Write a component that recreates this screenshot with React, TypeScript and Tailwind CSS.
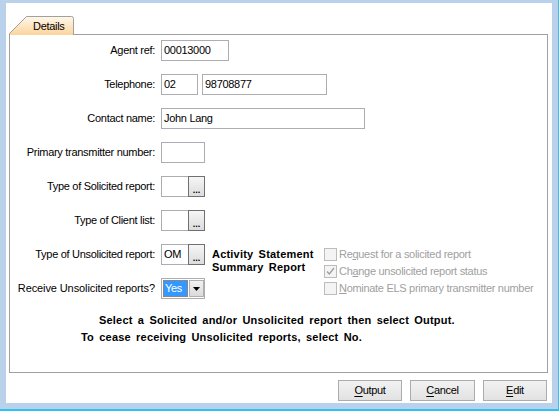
import React from 'react';

const font = { fontFamily: '"Liberation Sans", Arial, sans-serif' };

function Field({ w, value }: { w: string; value?: string }) {
  return (
    <div className={`${w} h-[21px] border border-[#abadb3] bg-white flex items-center pl-[2px] text-black`}>
      {value}
    </div>
  );
}

function PickBox({ value }: { value?: string }) {
  return (
    <div className="w-[44px] h-[21px] border border-[#abadb3] bg-white flex">
      <div className="flex-1 flex items-center pl-[2px]">{value}</div>
      <div className="w-[17px] -my-px -mr-px border border-[#707070] bg-gradient-to-b from-[#f6f6f6] to-[#dcdcdc] flex items-end justify-center pb-[3px]">
        <span className="text-[9px] leading-[6px] font-bold tracking-[0px] text-black">...</span>
      </div>
    </div>
  );
}

function Row({ label, children }: { label: string; children: React.ReactNode }) {
  return (
    <div className="flex items-center h-[21px]">
      <div className="w-[146px] text-right pr-px whitespace-nowrap">{label}</div>
      <div className="ml-[5px] flex gap-[3px]">{children}</div>
    </div>
  );
}

function Check({ checked, children }: { checked?: boolean; children: React.ReactNode }) {
  return (
    <div className="flex items-center h-[17px]">
      <div className="w-[13px] h-[13px] border border-[#bcbcbc] bg-[#f4f4f4] flex items-center justify-center">
        {checked && (
          <svg width="9" height="9" viewBox="0 0 9 9">
            <path d="M1 4.5 L3.3 7 L8 1" fill="none" stroke="#a0a0a0" strokeWidth="1.4" />
          </svg>
        )}
      </div>
      <span className="ml-[2px] text-[#a0a0a0]">{children}</span>
    </div>
  );
}

function Btn({ first, rest, w }: { first: string; rest: string; w: string }) {
  return (
    <button className={`${w} h-[21px] border border-[#acacac] bg-gradient-to-b from-[#f2f2f2] to-[#e2e2e2] text-black flex items-center justify-center`}>
      <span>
        <span className="underline underline-offset-2">{first}</span>
        {rest}
      </span>
    </button>
  );
}

export default function App() {
  return (
    <div
      style={font}
      className="w-[559px] h-[411px] bg-[#b9d1ea] border-r border-b-2 border-[#2bc4f2] pl-[6px] pt-[3px] pr-[6px] pb-[6px] text-[11px] leading-[13px] tracking-[-0.3px] text-black"
    >
      <div className="bg-white h-full pl-[3px] pt-[13px] flex flex-col">
        {/* Tab */}
        <div className="relative w-[66px] h-[19px] -mb-px z-10">
          <svg className="absolute inset-0" width="66" height="19" viewBox="0 0 66 19">
            <defs>
              <linearGradient id="tabg" x1="0" y1="0" x2="0" y2="1">
                <stop offset="0" stopColor="#fff8ec" />
                <stop offset="1" stopColor="#fcd49c" />
              </linearGradient>
            </defs>
            <path d="M0.5 19 L0.5 17.5 L17.5 0.5 L62.5 0.5 Q64.5 0.5 64.5 2.5 L64.5 19 Z" fill="url(#tabg)" stroke="#a0a0a0" />
            <rect x="1" y="18" width="63" height="1" fill="#fcd49c" />
          </svg>
          <div className="relative pl-[24px] pt-[4px]">Details</div>
        </div>

        {/* Panel */}
        <div className="w-[539px] h-[339px] border border-[#a0a0a0] pt-[5px]">
          <div className="flex flex-col gap-[13px]">
            <Row label="Agent ref:">
              <Field w="w-[68px]" value="00013000" />
            </Row>
            <Row label="Telephone:">
              <Field w="w-[37px]" value="02" />
              <div className="ml-px">
                <Field w="w-[125px]" value="98708877" />
              </div>
            </Row>
            <Row label="Contact name:">
              <Field w="w-[204px]" value="John Lang" />
            </Row>
            <Row label="Primary transmitter number:">
              <Field w="w-[44px]" />
            </Row>
            <Row label="Type of Solicited report:">
              <PickBox />
            </Row>
            <Row label="Type of Client list:">
              <PickBox />
            </Row>
            <div className="flex">
              <div className="w-[314px] flex flex-col gap-[13px]">
                <div className="flex items-start h-[21px]">
                  <div className="w-[146px] text-right pr-px self-center">Type of Unsolicited report:</div>
                  <div className="ml-[5px]">
                    <PickBox value="OM" />
                  </div>
                  <div className="ml-[7px] mt-[4px] font-bold tracking-[0.2px] [word-spacing:2px] whitespace-nowrap">
                    <div>Activity Statement</div>
                    <div>Summary Report</div>
                  </div>
                </div>
                <div className="flex items-center h-[21px]">
                  <div className="w-[146px] text-right pr-px whitespace-nowrap tracking-[-0.1px]">Receive Unsolicited reports?</div>
                  <div className="ml-[5px] w-[44px] h-[21px] border border-[#abadb3] bg-white flex items-center pl-px">
                    <div className="w-[25px] h-[17px] bg-[#3399ff] text-white outline-1 outline-dotted outline-[#e07020] -outline-offset-1 flex items-center pl-[2px]">
                      Yes
                    </div>
                    <div className="ml-px w-[15px] h-[17px] border border-[#b0b0b0] bg-gradient-to-b from-[#f2f2f2] to-[#dadada] flex items-center justify-center">
                      <svg width="7" height="4" viewBox="0 0 7 4">
                        <path d="M0 0 H7 L3.5 4 Z" fill="#000" />
                      </svg>
                    </div>
                  </div>
                </div>
              </div>
              <div className="pt-[2px] flex flex-col">
                <Check>
                  Re<span className="underline">q</span>uest for a solicited report
                </Check>
                <Check checked>
                  Ch<span className="underline">a</span>nge unsolicited report status
                </Check>
                <Check>
                  <span className="underline">N</span>ominate ELS primary transmitter number
                </Check>
              </div>
            </div>
          </div>

          <div className="mt-[15px] font-bold tracking-[0.2px] [word-spacing:2px] whitespace-nowrap">
            <div className="pl-[89px]">Select a Solicited and/or Unsolicited report then select Output.</div>
            <div className="pl-[71px] mt-[4px]">To cease receiving Unsolicited reports, select No.</div>
          </div>
        </div>

        {/* Buttons */}
        <div className="w-[538px] mt-[7px] flex justify-end gap-[8px]">
          <Btn w="w-[64px]" first="O" rest="utput" />
          <Btn w="w-[65px]" first="C" rest="ancel" />
          <Btn w="w-[64px]" first="E" rest="dit" />
        </div>
      </div>
    </div>
  );
}
